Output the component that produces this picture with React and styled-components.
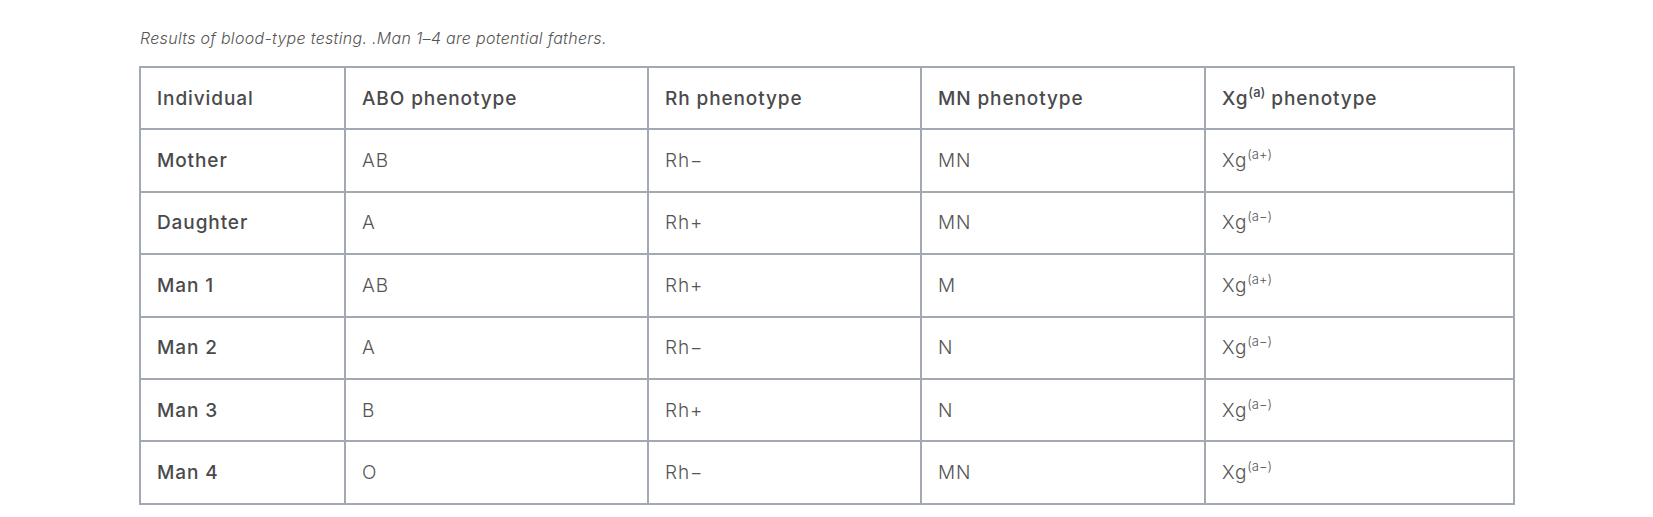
import React from "react";
import styled, { createGlobalStyle } from "styled-components";

const GlobalStyle = createGlobalStyle`
  html, body {
    margin: 0;
    padding: 0;
    background: #fff;
  }
  body {
    font-family: Inter, "Open Sans", "Liberation Sans", sans-serif;
    color: #4b4b4d;
  }
`;

const Page = styled.div`
  padding: 28px 140px 0 139px;
`;

const Caption = styled.p`
  margin: 0 0 18px 1px;
  font-size: 16px;
  font-style: italic;
  font-weight: 300;
  letter-spacing: 0.3px;
  line-height: 20px;
  color: #555;
`;

const Table = styled.table`
  width: 100%;
  border-collapse: collapse;
  table-layout: fixed;
  border: 2px solid #a3a9b2;
`;

const Col = styled.col`
  width: ${(p) => p.$w}px;
`;

const Cell = styled.td`
  height: 60.4px;
  padding: 0 16px;
  border: 2px solid #a3a9b2;
  font-size: 19px;
  letter-spacing: 0.9px;
  font-weight: ${(p) => (p.$head ? 500 : 300)};
  color: ${(p) => (p.$head ? "#4a4a4c" : "#555")};
  vertical-align: middle;
  text-align: left;
  white-space: nowrap;
`;

const Sup = styled.sup`
  font-size: 13px;
  letter-spacing: 0;
  line-height: 0;
  vertical-align: 8px;
`;

const columns = [205, 303, 273, 284, 309];

const rows = [
  ["Mother", "AB", "Rh−", "MN", "a+"],
  ["Daughter", "A", "Rh+", "MN", "a−"],
  ["Man 1", "AB", "Rh+", "M", "a+"],
  ["Man 2", "A", "Rh−", "N", "a−"],
  ["Man 3", "B", "Rh+", "N", "a−"],
  ["Man 4", "O", "Rh−", "MN", "a−"],
];

function Xg({ sup, children }) {
  return (
    <>
      Xg<Sup>({sup})</Sup>
      {children}
    </>
  );
}

export default function App() {
  return (
    <Page>
      <GlobalStyle />
      <Caption>Results of blood-type testing. .Man 1–4 are potential fathers.</Caption>
      <Table>
        <colgroup>
          {columns.map((w, i) => (
            <Col key={i} $w={w} />
          ))}
        </colgroup>
        <thead>
          <tr>
            <Cell as="th" $head>Individual</Cell>
            <Cell as="th" $head>ABO phenotype</Cell>
            <Cell as="th" $head>Rh phenotype</Cell>
            <Cell as="th" $head>MN phenotype</Cell>
            <Cell as="th" $head>
              <Xg sup="a"> phenotype</Xg>
            </Cell>
          </tr>
        </thead>
        <tbody>
          {rows.map((r) => (
            <tr key={r[0]}>
              <Cell $head>{r[0]}</Cell>
              <Cell>{r[1]}</Cell>
              <Cell>{r[2]}</Cell>
              <Cell>{r[3]}</Cell>
              <Cell>
                <Xg sup={r[4]} />
              </Cell>
            </tr>
          ))}
        </tbody>
      </Table>
    </Page>
  );
}
